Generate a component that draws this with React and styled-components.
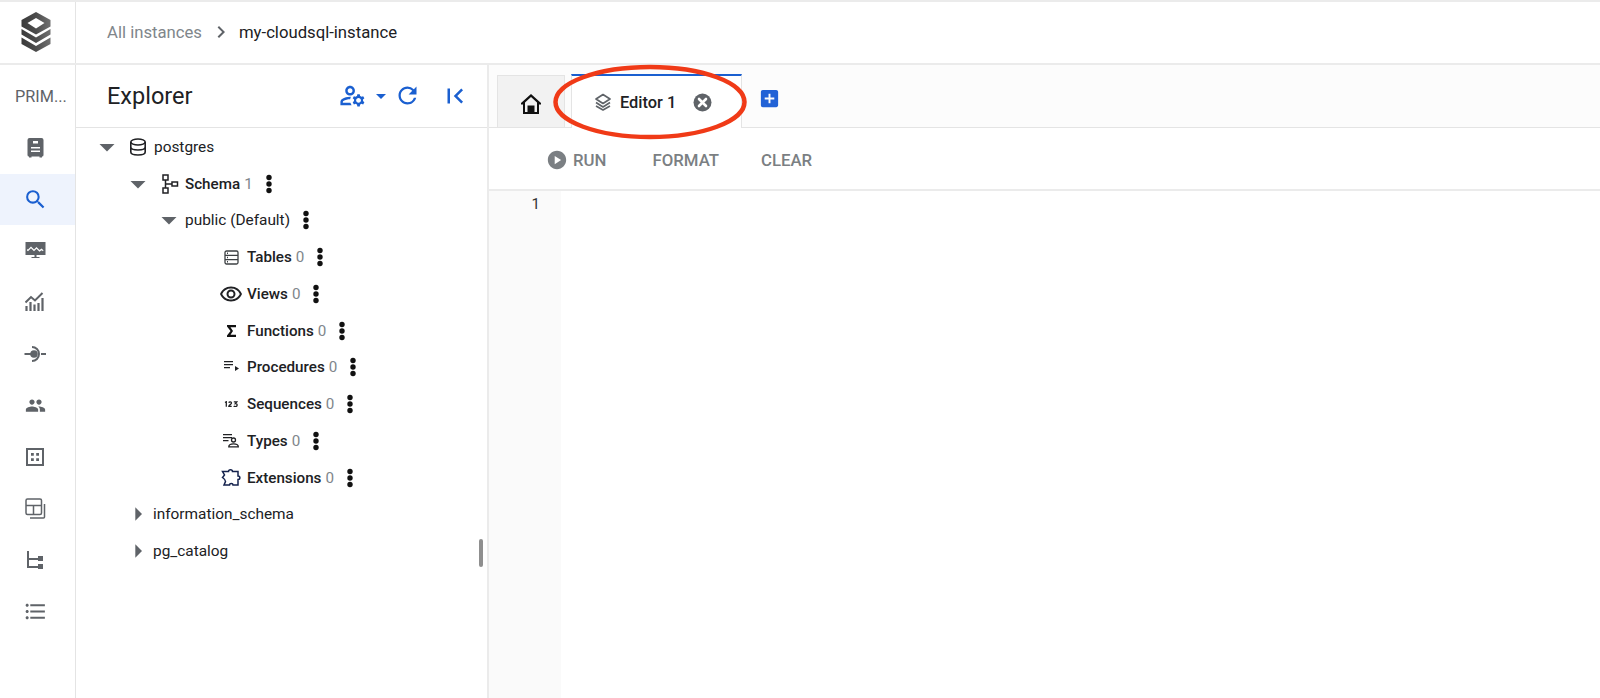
import React from 'react';
import styled, { createGlobalStyle } from 'styled-components';
import {
  MdSearch, MdPeople, MdFormatListBulleted, MdRefresh, MdFirstPage, MdOutlineManageAccounts,
  MdArrowDropDown, MdArrowRight, MdPlayCircle, MdAddBox, MdChevronRight,
  MdOutlineRemoveRedEye,
} from 'react-icons/md';

const Global = createGlobalStyle`
  html, body { margin: 0; padding: 0; height: 100%; background: #fff; overflow: hidden; }
  * { box-sizing: border-box; }
  #root { height: 100%; font-family: Roboto, "Liberation Sans", sans-serif; }
`;

const Page = styled.div`
  width: 1600px; height: 698px; display: flex; flex-direction: column;
  border-top: 2px solid #ebebeb; position: relative; overflow: hidden;
`;
const Header = styled.header`
  height: 63px; display: flex; border-bottom: 2px solid #ebebeb; flex: none;
`;
const LogoCell = styled.div`
  width: 76px; flex: none; display: flex; align-items: center; justify-content: center;
  border-right: 1px solid #e4e4e4; padding: 0 3px 2px 0;
`;
const Breadcrumb = styled.nav`
  display: flex; align-items: center; padding-left: 31px; font-size: 16.7px; color: #202124; padding-bottom: 1px;
`;
const Crumb = styled.span`
  color: #80868b;
`;
const Sep = styled(MdChevronRight)`
  font-size: 24px; color: #5f6368; margin: 0 6px 0 7px;
`;
const Body = styled.div`
  flex: 1; display: flex; min-height: 0;
`;
const Rail = styled.aside`
  width: 76px; flex: none; border-right: 1px solid #e4e4e4; display: flex; flex-direction: column;
`;
const RailTitle = styled.div`
  height: 57px; flex: none; padding: 22px 0 0 15px; font-size: 16.3px; line-height: 19px; color: #5f6368;
`;
const RailItem = styled.div`
  height: 51.55px; flex: none; display: flex; align-items: center; justify-content: center; padding-right: 5px;
  background: ${p => (p.$active ? '#eef3fd' : 'transparent')};
  color: ${p => (p.$active ? '#1a5fd0' : '#5f6368')};
  font-size: ${p => p.$size || 22}px;
`;
const Explorer = styled.section`
  width: 413px; flex: none; border-right: 2px solid #ebebeb; display: flex; flex-direction: column; position: relative;
`;
const ExplorerHead = styled.div`
  height: 63px; flex: none; border-bottom: 1px solid #e4e4e4; display: flex; align-items: center;
  padding: 0 17px 1px 31px;
`;
const ExplorerTitle = styled.h2`
  flex: 1; margin: 0; font-size: 23.5px; font-weight: 400; color: #202124;
`;
const HeadIcons = styled.div`
  display: flex; align-items: center; color: #1a5fd0;
`;
const HeadIcon = styled.span`
  display: flex; margin-left: ${p => p.$ml || 0}px; font-size: ${p => p.$size || 26}px;
`;
const Tree = styled.div`
  padding-top: 0.5px; display: flex; flex-direction: column;
`;
const Row = styled.div`
  height: 36.75px; display: flex; align-items: center; padding-left: ${p => p.$indent}px;
  font-size: 15.4px; color: #202124;
`;
const Caret = styled.span`
  width: 22px; height: 22px; flex: none; display: flex; align-items: center; justify-content: center;
  color: #5f6368; font-size: ${p => p.$size || 36}px; margin-right: ${p => p.$mr}px;
  svg { flex: none; }
`;
const NodeIcon = styled.span`
  width: 24px; flex: none; display: flex; align-items: center; justify-content: center;
  margin-right: ${p => p.$mr ?? 4}px; font-size: ${p => p.$size || 18}px; color: #202124;
`;
const Label = styled.span`
  margin-left: ${p => p.$ml || 0}px;
  font-weight: ${p => (p.$bold ? 500 : 400)};
  font-size: ${p => (p.$bold ? '15.2px' : 'inherit')};
`;
const Count = styled.span`
  color: #80868b; margin-left: 4px; font-weight: 400;
`;
const KebabSvg = styled.svg`
  margin-left: 6px; flex: none;
`;
const Thumb = styled.div`
  position: absolute; right: 4px; top: 474px; width: 4px; height: 28px; background: #8f8f8f; border-radius: 2px;
`;
const Main = styled.main`
  flex: 1; display: flex; flex-direction: column; min-width: 0;
`;
const TabStrip = styled.div`
  height: 63px; flex: none; display: flex; align-items: flex-end; padding-left: 8px;
  border-bottom: 1px solid #e4e4e4; background: #fcfcfc;
`;
const HomeTab = styled.div`
  width: 68px; height: 52px; flex: none; display: flex; align-items: center; justify-content: center;
  background: #f2f2f2; border: 1px solid #e4e4e4; border-bottom: none; padding-top: 4px;
`;
const EditorTab = styled.div`
  width: 171px; height: 54px; margin-left: 6px; margin-bottom: -1px; flex: none; background: #fff;
  border-top: 2px solid #1a5fd0; border-right: 1px solid #e4e4e4; border-left: 1px solid #e4e4e4;
  display: flex; align-items: center; padding-left: 22px; font-size: 16.4px; font-weight: 500; color: #202124;
`;
const TabText = styled.span`
  margin-left: 8px; margin-right: 17px;
`;
const AddTab = styled(MdAddBox)`
  font-size: 23px; color: #2262d6; margin: 0 0 17px 16px; align-self: flex-end;
`;
const Toolbar = styled.div`
  height: 63px; flex: none; border-bottom: 2px solid #ebebeb; display: flex; align-items: center;
  padding: 3px 0 0 57px; color: #7b7f83; font-size: 16.8px; font-weight: 500; background: #fff;
`;
const ToolButton = styled.span`
  display: flex; align-items: center; margin-right: ${p => p.$mr || 0}px; gap: 5px;
`;
const Run = styled(MdPlayCircle)`
  font-size: 22px;
`;
const EditorArea = styled.div`
  flex: 1; display: flex;
`;
const Gutter = styled.div`
  width: 72px; background: #fafafa; text-align: right; padding: 4px 21px 0 0; font-size: 15px; color: #333;
`;
const Highlight = styled.svg`
  position: absolute; left: 552px; top: 60px; pointer-events: none;
`;

const Kebab = () => (
  <KebabSvg width="20" height="20" viewBox="0 0 20 20" fill="#111">
    <circle cx="10" cy="3.500" r="2.700" />
    <circle cx="10" cy="10" r="2.700" />
    <circle cx="10" cy="16.500" r="2.700" />
  </KebabSvg>
);
const Close = () => (
  <svg width="19" height="19" viewBox="0 0 19 19">
    <circle cx="9.500" cy="9.500" r="9" fill="#5f6368" />
    <path d="M6 6l7 7M13 6l-7 7" stroke="#fff" strokeWidth="2.600" strokeLinecap="round" />
  </svg>
);
const Logo = () => (
  <svg width="30" height="40" viewBox="0 0 30 40">
    <defs>
      <linearGradient id="lg" x1="0" x2="1" y1="0" y2="0">
        <stop offset="0" stopColor="#3a3a3a" />
        <stop offset="0.5" stopColor="#4c4c4c" />
        <stop offset="1" stopColor="#707070" />
      </linearGradient>
    </defs>
    <path fill="url(#lg)" fillRule="evenodd" d="M15 0 29.500 8v6.500L15 22.500.5 14.500V8zM15 6 6.500 11 15 16.500 23.500 11z" />
    <path fill="url(#lg)" d="M.5 17 15 25.500 29.500 17v5.500L15 31 .5 22.500z" />
    <path fill="url(#lg)" d="M.5 25.500 15 34l14.500-8.500V32L15 40 .5 32z" />
  </svg>
);
const Doc = () => (
  <svg width="17" height="20" viewBox="0 0 17 20" fill="#5f6368">
    <path fillRule="evenodd" d="M2.500 0h12A2 2 0 0 1 16.500 2v15a1.500 1.500 0 0 1-1.500 1.500v1h-2.500v-1h-8v1H2v-1A1.500 1.500 0 0 1 .5 17V2a2 2 0 0 1 2-2zM6 3v2.500h5V3zM4 9v1.500h9V9zM4 12.500V14h9v-1.500z" />
  </svg>
);
const Monitor = () => (
  <svg width="21" height="20" viewBox="0 0 21 20" fill="#5f6368">
    <path fillRule="evenodd" d="M.5 1h20v13h-9v2h3v1h-8v-1h3v-2h-9zM2 9.500l1 .8 3-3 3 3 2.500-2.500 3 3 2-1.500 1.500 1 .5-1-2-1.800-2 1.500-3-3L9 8.500l-3-3-3 3-.8-.5z" />
  </svg>
);
const Chart = () => (
  <svg width="20" height="20" viewBox="0 0 20 20" fill="none" stroke="#5f6368" strokeWidth="2">
    <path d="M.5 10.500 6 5l4 3.500L17.500 1" />
    <path d="M1.500 19v-5M5.500 19v-9M9.500 19v-6.500M13.500 19v-8M17.500 19V6" strokeWidth="2.200" />
  </svg>
);
const Socket = () => (
  <svg width="22" height="20" viewBox="0 0 22 20" fill="none" stroke="#5f6368" strokeWidth="2">
    <circle cx="10" cy="10" r="3.800" fill="#5f6368" stroke="none" />
    <path d="M.5 10H7M17 10h5" />
    <path d="M8 3a7 7 0 0 1 0 14" />
  </svg>
);
const Instances = () => (
  <svg width="20" height="20" viewBox="0 0 20 20" fill="#5f6368">
    <path fillRule="evenodd" d="M1 1h18v18H1zM3 3v14h14V3zM6 6h2.800v2.800H6zM11.200 6H14v2.800h-2.800zM6 11.200h2.800V14H6zM11.200 11.200H14V14h-2.800z" />
  </svg>
);
const Dash = () => (
  <svg width="21" height="21" viewBox="0 0 21 21" fill="none" stroke="#5f6368" strokeWidth="1.500">
    <rect x="1" y="1" width="15.500" height="15.500" rx="1.500" />
    <path d="M1 7.500h15.500M8.500 7.500v9M19.500 6v13a1 1 0 0 1-1 1H5" />
  </svg>
);
const Tree2 = () => (
  <svg width="18" height="18" viewBox="0 0 18 18" fill="#5f6368">
    <path d="M1 0h2v7h9V5h5v5h-5V9H3v6h9v-2h5v5h-5v-1H1z" />
  </svg>
);
const Database = () => (
  <svg width="20" height="20" viewBox="0 0 20 20" fill="none" stroke="#202124" strokeWidth="1.600">
    <ellipse cx="10" cy="5" rx="7.200" ry="3" />
    <path d="M2.800 5v10c0 1.700 3.200 3 7.200 3s7.200-1.300 7.200-3V5M2.800 10c0 1.700 3.200 3 7.200 3s7.200-1.300 7.200-3" />
  </svg>
);
const SchemaIcon = () => (
  <svg width="18" height="20" viewBox="0 0 18 20" fill="none" stroke="#202124" strokeWidth="1.500">
    <rect x="2" y="1" width="5" height="5" />
    <rect x="2" y="14" width="5" height="5" />
    <rect x="11" y="8" width="5.500" height="4" />
    <path d="M4.500 6v8M4.500 10H11" />
  </svg>
);
const TableIcon = () => (
  <svg width="15" height="15" viewBox="0 0 15 15" fill="none" stroke="#3c4043" strokeWidth="1.300">
    <rect x="1" y="1" width="13" height="13" rx="1.500" />
    <path d="M1 5.300h13M1 9.600h13" />
    <path d="M3 3.200h1M3 7.500h1M3 11.800h1" strokeWidth="1.400" />
  </svg>
);
const Sigma = () => (
  <svg width="9" height="12" viewBox="0 0 9 12" fill="#111">
    <path d="M0 0h9v2.200H3.500L6 6l-2.500 3.800H9V12H0v-1.500L3.500 6 0 1.500z" />
  </svg>
);
const Proc = () => (
  <svg width="15" height="12" viewBox="0 0 15 12" fill="#202124">
    <path d="M0 0h9v1.300H0zM0 3h9v1.300H0zM0 6h6v1.300H0zM11 5l4 2.500-4 2.500z" />
  </svg>
);
const Seq = () => (
  <svg width="14" height="6" viewBox="0 0 14 6" fill="none" stroke="#202124" strokeWidth="1.300">
    <path d="M1 1.500 2.300.7v5M4.800 1.800c.4-1.300 2.700-1.200 2.700.2 0 1.300-2.700 2-2.700 3.400h2.900M9.800.9h3l-1.500 1.700c2.500-.2 2.500 3-.1 3-.6 0-1.100-.2-1.400-.7" />
  </svg>
);
const TypesIcon = () => (
  <svg width="16" height="15" viewBox="0 0 16 15" fill="#202124">
    <path d="M0 1h9v1.300H0zM0 4h9v1.300H0zM0 7h5.500v1.300H0z" />
    <circle cx="10.500" cy="7" r="2" fill="none" stroke="#202124" strokeWidth="1.300" />
    <path d="M5.800 13.800c0-3.800 9.500-3.800 9.500 0z" fill="none" stroke="#202124" strokeWidth="1.300" />
  </svg>
);
const Puzzle = () => (
  <svg width="20" height="20" viewBox="0 0 20 20" fill="none" stroke="#14224d" strokeWidth="1.500">
    <path d="M1.500 3.500h6C7.500 1 11.500 1 11.500 3.500H17V8c2.500 0 2.500 3.500 0 3.500V17h-5c0-2-3.500-2-3.500 0H3l1.500-3.500C4.500 11.500 3 10.500 1.500 9.500L3.500 7z" />
  </svg>
);
const Stack = () => (
  <svg width="18" height="18" viewBox="0 0 18 18" fill="none" stroke="#5f6368" strokeWidth="1.700" strokeLinejoin="round">
    <path d="M9 1.500 16 6l-7 4.500L2 6z" />
    <path d="M2 9.500l7 4.500 7-4.500M2 13l7 4 7-4" />
  </svg>
);
const HomeIcon = () => (
  <svg width="22" height="22" viewBox="0 0 22 22" fill="#111">
    <path fillRule="evenodd" d="M11 1 21 10v1.500h-2V21H3v-9.500H1V10zM11 4 5 9.500V19h2.500v-6.500h7V19H17V9.500z" />
  </svg>
);

const railIcons = [
  { icon: <Doc /> },
  { icon: <MdSearch />, active: true, size: 25 },
  { icon: <Monitor /> },
  { icon: <Chart /> },
  { icon: <Socket /> },
  { icon: <MdPeople />, size: 21 },
  { icon: <Instances /> },
  { icon: <Dash /> },
  { icon: <Tree2 /> },
  { icon: <MdFormatListBulleted />, size: 25 },
];
const nodes = [
  ['Tables', <TableIcon />],
  ['Views', <MdOutlineRemoveRedEye />, 24],
  ['Functions', <Sigma />],
  ['Procedures', <Proc />],
  ['Sequences', <Seq />],
  ['Types', <TypesIcon />],
  ['Extensions', <Puzzle />],
];

export default function App() {
  return (
    <Page>
      <Global />
      <Header>
        <LogoCell><Logo /></LogoCell>
        <Breadcrumb>
          <Crumb>All instances</Crumb>
          <Sep />
          <span>my-cloudsql-instance</span>
        </Breadcrumb>
      </Header>
      <Body>
        <Rail>
          <RailTitle>PRIM...</RailTitle>
          {railIcons.map(({ icon, active, size }, i) => (
            <RailItem key={i} $active={active} $size={size}>{icon}</RailItem>
          ))}
        </Rail>
        <Explorer>
          <ExplorerHead>
            <ExplorerTitle>Explorer</ExplorerTitle>
            <HeadIcons>
              <HeadIcon $size={29}><MdOutlineManageAccounts /></HeadIcon>
              <HeadIcon $size={24} $ml={2}><MdArrowDropDown /></HeadIcon>
              <HeadIcon $size={27} $ml={1}><MdRefresh /></HeadIcon>
              <HeadIcon $size={30} $ml={19}><MdFirstPage /></HeadIcon>
            </HeadIcons>
          </ExplorerHead>
          <Tree>
            <Row $indent={20}>
              <Caret $mr={8}><MdArrowDropDown /></Caret>
              <NodeIcon $mr={0}><Database /></NodeIcon>
              <Label $ml={4}>postgres</Label>
            </Row>
            <Row $indent={51}>
              <Caret $mr={9}><MdArrowDropDown /></Caret>
              <NodeIcon $mr={0} $size={18}><SchemaIcon /></NodeIcon>
              <Label $bold $ml={3}>Schema<Count>1</Count></Label>
              <Kebab />
            </Row>
            <Row $indent={82}>
              <Caret $mr={5}><MdArrowDropDown /></Caret>
              <Label>public (Default)</Label>
              <Kebab />
            </Row>
            {nodes.map(([name, icon, size]) => (
              <Row key={name} $indent={143}>
                <NodeIcon $size={size}>{icon}</NodeIcon>
                <Label $bold>{name}<Count>0</Count></Label>
                <Kebab />
              </Row>
            ))}
            <Row $indent={51}>
              <Caret $mr={4} $size={32}><MdArrowRight /></Caret>
              <Label>information_schema</Label>
            </Row>
            <Row $indent={51}>
              <Caret $mr={4} $size={32}><MdArrowRight /></Caret>
              <Label>pg_catalog</Label>
            </Row>
          </Tree>
          <Thumb />
        </Explorer>
        <Main>
          <TabStrip>
            <HomeTab><HomeIcon /></HomeTab>
            <EditorTab>
              <Stack />
              <TabText>Editor 1</TabText>
              <Close />
            </EditorTab>
            <AddTab />
          </TabStrip>
          <Toolbar>
            <ToolButton $mr={46}><Run />RUN</ToolButton>
            <ToolButton $mr={42}>FORMAT</ToolButton>
            <ToolButton>CLEAR</ToolButton>
          </Toolbar>
          <EditorArea>
            <Gutter>1</Gutter>
          </EditorArea>
        </Main>
      </Body>
      <Highlight width="200" height="80" viewBox="0 0 200 80">
        <ellipse cx="98" cy="40" rx="94.500" ry="35" fill="none" stroke="#f03a17" strokeWidth="4.500" />
      </Highlight>
    </Page>
  );
}
